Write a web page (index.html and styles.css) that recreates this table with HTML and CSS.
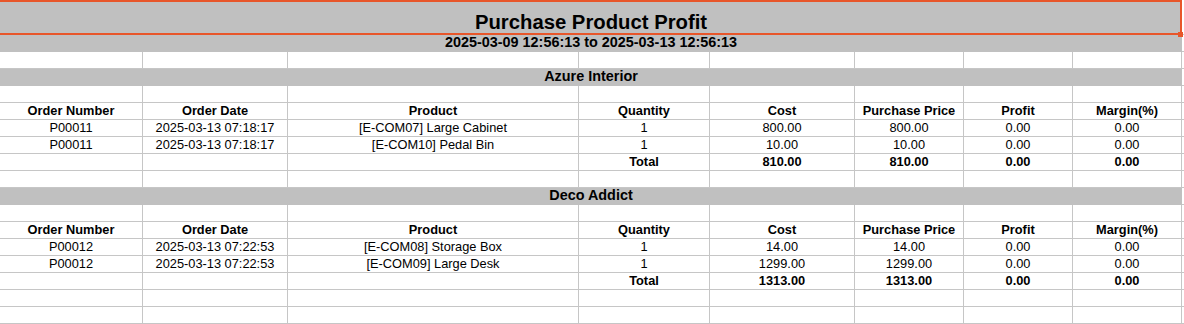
FILE: index.html
```html
<!DOCTYPE html>
<html>
<head>
<meta charset="utf-8">
<link rel="stylesheet" href="styles.css">
<title>Purchase Product Profit</title>
</head>
<body>
<div class="sheet">
  <div class="row title-row"><div class="band title">Purchase Product Profit</div></div>
  <div class="selection"><span class="handle"></span></div>
  <div class="row"><div class="band big">2025-03-09 12:56:13 to 2025-03-13 12:56:13</div></div>
  <div class="row cells"><span></span><span></span><span></span><span></span><span></span><span></span><span></span><span></span></div>
  <div class="row"><div class="band big">Azure Interior</div></div>
  <div class="row cells"><span></span><span></span><span></span><span></span><span></span><span></span><span></span><span></span></div>
  <div class="row cells bold"><span>Order Number</span><span>Order Date</span><span>Product</span><span>Quantity</span><span>Cost</span><span>Purchase Price</span><span>Profit</span><span>Margin(%)</span></div>
  <div class="row cells"><span>P00011</span><span>2025-03-13 07:18:17</span><span>[E-COM07] Large Cabinet</span><span>1</span><span>800.00</span><span>800.00</span><span>0.00</span><span>0.00</span></div>
  <div class="row cells"><span>P00011</span><span>2025-03-13 07:18:17</span><span>[E-COM10] Pedal Bin</span><span>1</span><span>10.00</span><span>10.00</span><span>0.00</span><span>0.00</span></div>
  <div class="row cells bold"><span></span><span></span><span></span><span>Total</span><span>810.00</span><span>810.00</span><span>0.00</span><span>0.00</span></div>
  <div class="row cells"><span></span><span></span><span></span><span></span><span></span><span></span><span></span><span></span></div>
  <div class="row"><div class="band big">Deco Addict</div></div>
  <div class="row cells"><span></span><span></span><span></span><span></span><span></span><span></span><span></span><span></span></div>
  <div class="row cells bold"><span>Order Number</span><span>Order Date</span><span>Product</span><span>Quantity</span><span>Cost</span><span>Purchase Price</span><span>Profit</span><span>Margin(%)</span></div>
  <div class="row cells"><span>P00012</span><span>2025-03-13 07:22:53</span><span>[E-COM08] Storage Box</span><span>1</span><span>14.00</span><span>14.00</span><span>0.00</span><span>0.00</span></div>
  <div class="row cells"><span>P00012</span><span>2025-03-13 07:22:53</span><span>[E-COM09] Large Desk</span><span>1</span><span>1299.00</span><span>1299.00</span><span>0.00</span><span>0.00</span></div>
  <div class="row cells bold"><span></span><span></span><span></span><span>Total</span><span>1313.00</span><span>1313.00</span><span>0.00</span><span>0.00</span></div>
  <div class="row cells"><span></span><span></span><span></span><span></span><span></span><span></span><span></span><span></span></div>
  <div class="row cells"><span></span><span></span><span></span><span></span><span></span><span></span><span></span><span></span></div>
</div>
</body>
</html>
```

FILE: styles.css
```css
html, body {
  margin: 0;
  padding: 0;
  background: #ffffff;
}
body {
  font-family: "Liberation Sans", Arial, sans-serif;
  font-size: 12.8px;
  color: #000;
  overflow: hidden;
}
.sheet {
  position: relative;
  width: 1184px;
}
.row {
  box-sizing: border-box;
  height: 17px;
  width: 1184px;
  border-bottom: 1px solid #c6c6c6;
  display: flex;
}
.cells {
  display: grid;
  grid-template-columns: 143px 145px 291px 131px 145px 109px 109px 109px;
}
.cells span {
  box-sizing: border-box;
  border-right: 1px solid #c6c6c6;
  height: 16px;
  line-height: 16px;
  text-align: center;
  white-space: nowrap;
  overflow: hidden;
}
.band {
  width: 1182px;
  height: 17px;
  margin-bottom: -1px;
  background: #c0c0c0;
  text-align: center;
  line-height: 16px;
  white-space: nowrap;
}
.big {
  font-size: 14.4px;
  font-weight: bold;
  line-height: 15px;
}
.bold {
  font-weight: bold;
}
.title-row {
  height: 35px;
}
.title {
  height: 35px;
  font-size: 20.3px;
  font-weight: bold;
  line-height: 23px;
  padding-top: 11px;
  box-sizing: border-box;
  overflow: hidden;
}
.selection {
  position: absolute;
  left: -2px;
  top: 0;
  width: 1184px;
  height: 35px;
  box-sizing: border-box;
  border: 2px solid #e8562a;
  pointer-events: none;
}
.handle {
  position: absolute;
  right: -3px;
  bottom: -4px;
  width: 5px;
  height: 5px;
  background: #e8562a;
}
```
